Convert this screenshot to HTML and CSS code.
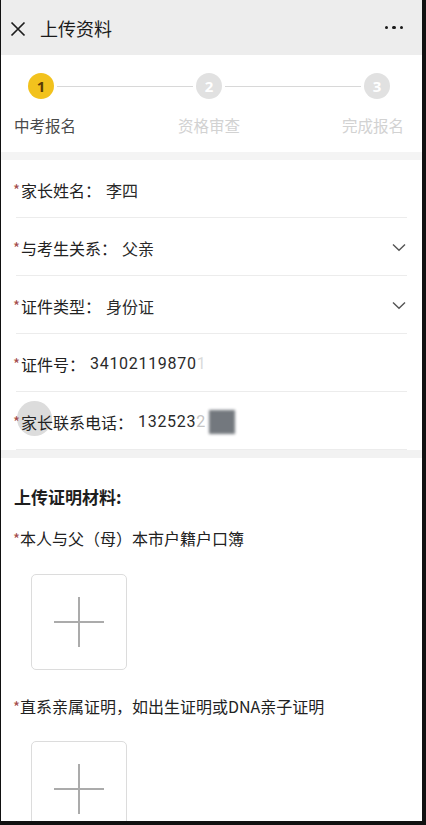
FILE: index.html
```html
<!DOCTYPE html>
<html lang="zh-CN">
<head>
<meta charset="utf-8">
<title>上传资料</title>
<link rel="stylesheet" href="styles.css">
</head>
<body>
<div class="page">
  <header class="topbar">
    <svg class="close" width="16" height="16" viewBox="0 0 16 16"><path d="M1.5 1.5 L14.5 14.5 M14.5 1.5 L1.5 14.5" stroke="#1e1e1e" stroke-width="1.7" fill="none"/></svg>
    <span class="title">上传资料</span>
    <span class="more"><i></i><i></i><i></i></span>
  </header>

  <section class="steps">
    <div class="step-track">
      <span class="dot active">1</span>
      <span class="line"></span>
      <span class="dot">2</span>
      <span class="line"></span>
      <span class="dot">3</span>
    </div>
    <div class="step-labels">
      <span class="active">中考报名</span>
      <span>资格审查</span>
      <span>完成报名</span>
    </div>
  </section>

  <div class="band"></div>

  <section class="form">
    <div class="row"><span class="req">*</span><span class="label">家长姓名：</span><span class="value">李四</span></div>
    <div class="divider"></div>
    <div class="row"><span class="req">*</span><span class="label">与考生关系：</span><span class="value">父亲</span>
      <svg class="chev" width="14" height="9" viewBox="0 0 14 9"><path d="M1 1.5 L7 7.3 L13 1.5" stroke="#555" stroke-width="1.4" fill="none"/></svg></div>
    <div class="divider"></div>
    <div class="row"><span class="req">*</span><span class="label">证件类型：</span><span class="value">身份证</span>
      <svg class="chev" width="14" height="9" viewBox="0 0 14 9"><path d="M1 1.5 L7 7.3 L13 1.5" stroke="#555" stroke-width="1.4" fill="none"/></svg></div>
    <div class="divider"></div>
    <div class="row"><span class="req">*</span><span class="label">证件号：</span><span class="value num">34102119870<span class="fade">1</span></span></div>
    <div class="divider"></div>
    <div class="row ripple-row"><span class="ripple"></span><span class="req">*</span><span class="label">家长联系电话：</span><span class="value num">132523<span class="fade2">2</span><span class="blur"></span></span></div>
    <div class="divider"></div>
  </section>

  <div class="band band2"></div>

  <section class="upload">
    <h2 class="sec-title">上传证明材料:</h2>
    <p class="up-label"><span class="req">*</span>本人与父（母）本市户籍户口簿</p>
    <div class="up-box"><svg width="50" height="50" viewBox="0 0 50 50"><path d="M0 25 H50 M25 0 V50" stroke="#ababab" stroke-width="2" fill="none"/></svg></div>
    <p class="up-label second"><span class="req">*</span>直系亲属证明，如出生证明或DNA亲子证明</p>
    <div class="up-box"><svg width="50" height="50" viewBox="0 0 50 50"><path d="M0 25 H50 M25 0 V50" stroke="#ababab" stroke-width="2" fill="none"/></svg></div>
  </section>
</div>
</body>
</html>
```

FILE: styles.css
```css
* { box-sizing: border-box; }
html, body { margin: 0; padding: 0; }
body {
  background: #111;
  font-family: "Noto Sans CJK SC", "Noto Sans", sans-serif;
  color: #222;
}
.page {
  width: 421px;
  height: 821px;
  margin-left: 1px;
  background: #fff;
  overflow: hidden;
}
.topbar {
  height: 55px;
  background: #ededed;
  display: flex;
  align-items: center;
  padding: 0 19px 0 9px;
}
.close { display: block; margin-top: 2px; }
.title {
  margin-left: 14px;
  font-size: 18px;
  color: #1a1a1a;
  flex: 1;
}
.more { display: flex; gap: 4px; }
.more i {
  display: block;
  width: 3.5px;
  height: 3.5px;
  border-radius: 50%;
  background: #1a1a1a;
}

.steps {
  height: 97px;
  padding-top: 18px;
}
.step-track {
  display: flex;
  align-items: center;
  padding: 0 32px 0 27px;
}
.dot {
  width: 26px;
  height: 26px;
  border-radius: 50%;
  background: #e1e1e1;
  color: #fff;
  font-size: 15px;
  font-weight: 700;
  display: flex;
  align-items: center;
  justify-content: center;
  line-height: 1;
  font-family: "Noto Sans", sans-serif;
}
.dot.active {
  background: #f2c21d;
  color: #5b3b05;
}
.line {
  flex: 1;
  height: 1px;
  background: #d8d8d8;
  margin: 0 3px;
}
.step-labels {
  display: flex;
  justify-content: space-between;
  padding: 0 18px 0 13px;
  margin-top: 16px;
  font-size: 15.5px;
  line-height: 20px;
  color: #d2d2d2;
}
.step-labels .active { color: #4a4a4a; }

.band { height: 8px; background: #f4f4f4; }
.band2 { height: 8px; background: #f2f2f2; }

.row {
  height: 57px;
  display: flex;
  align-items: center;
  padding: 2px 16px 0 12px;
  font-size: 16px;
  position: relative;
}
.req {
  color: #a34a4a;
  font-size: 15px;
  width: 8px;
  position: relative;
  z-index: 1;
}
.label {
  color: #222;
  position: relative;
  z-index: 1;
}
.value {
  margin-left: 5px;
  color: #2a2a2a;
  flex: 1;
  display: flex;
  align-items: center;
}
.value.num {
  font-family: Roboto, "Noto Sans CJK SC", sans-serif;
  letter-spacing: 0.7px;
}
.fade { color: #dadada; }
.fade2 { color: #c4c4c4; }
.blur {
  display: inline-block;
  width: 26px;
  height: 24px;
  margin-left: 3px;
  background: #73787e;
  filter: blur(1.5px);
}
.chev { display: block; }
.divider {
  height: 1px;
  background: #ececec;
  margin: 0 15px;
}
.ripple {
  position: absolute;
  left: 16px;
  top: 9px;
  width: 35px;
  height: 35px;
  border-radius: 50%;
  background: #dcdcdc;
  z-index: 0;
}

.upload {
  padding: 27px 12px 0 12px;
}
.sec-title {
  margin: 0;
  font-size: 17px;
  line-height: 24px;
  font-weight: 700;
  color: #1e1e1e;
  padding-left: 1px;
}
.up-label {
  margin: 18px 0 0 0;
  font-size: 16px;
  line-height: 22px;
  color: #222;
}
.up-label.second { margin-top: 25px; }
.up-box {
  margin: 24px 0 0 18px;
  width: 96px;
  height: 96px;
  border: 1px solid #dcdcdc;
  border-radius: 5px;
  display: flex;
  align-items: center;
  justify-content: center;
}
.up-label.second + .up-box { margin-top: 23px; }
```
